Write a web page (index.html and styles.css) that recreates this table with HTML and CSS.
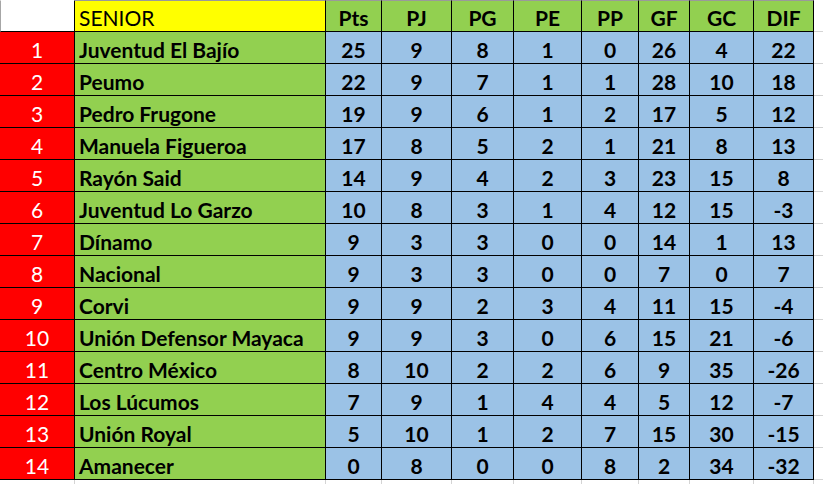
FILE: index.html
```html
<!DOCTYPE html>
<html lang="es">
<head>
<meta charset="utf-8">
<title>Tabla Senior</title>
<link rel="stylesheet" href="styles.css">
</head>
<body>
<div class="sheet">
  <div class="row head">
    <div class="cell corner"></div>
    <div class="cell title">SENIOR</div>
    <div class="cell hstat">Pts</div>
    <div class="cell hstat">PJ</div>
    <div class="cell hstat">PG</div>
    <div class="cell hstat">PE</div>
    <div class="cell hstat">PP</div>
    <div class="cell hstat">GF</div>
    <div class="cell hstat">GC</div>
    <div class="cell hstat">DIF</div>
  </div>
  <div class="row"><div class="cell pos">1</div><div class="cell team">Juventud El Bajío</div><div class="cell stat">25</div><div class="cell stat">9</div><div class="cell stat">8</div><div class="cell stat">1</div><div class="cell stat">0</div><div class="cell stat">26</div><div class="cell stat">4</div><div class="cell stat">22</div></div>
  <div class="row"><div class="cell pos">2</div><div class="cell team">Peumo</div><div class="cell stat">22</div><div class="cell stat">9</div><div class="cell stat">7</div><div class="cell stat">1</div><div class="cell stat">1</div><div class="cell stat">28</div><div class="cell stat">10</div><div class="cell stat">18</div></div>
  <div class="row"><div class="cell pos">3</div><div class="cell team">Pedro Frugone</div><div class="cell stat">19</div><div class="cell stat">9</div><div class="cell stat">6</div><div class="cell stat">1</div><div class="cell stat">2</div><div class="cell stat">17</div><div class="cell stat">5</div><div class="cell stat">12</div></div>
  <div class="row"><div class="cell pos">4</div><div class="cell team">Manuela Figueroa</div><div class="cell stat">17</div><div class="cell stat">8</div><div class="cell stat">5</div><div class="cell stat">2</div><div class="cell stat">1</div><div class="cell stat">21</div><div class="cell stat">8</div><div class="cell stat">13</div></div>
  <div class="row"><div class="cell pos">5</div><div class="cell team">Rayón Said</div><div class="cell stat">14</div><div class="cell stat">9</div><div class="cell stat">4</div><div class="cell stat">2</div><div class="cell stat">3</div><div class="cell stat">23</div><div class="cell stat">15</div><div class="cell stat">8</div></div>
  <div class="row"><div class="cell pos">6</div><div class="cell team">Juventud Lo Garzo</div><div class="cell stat">10</div><div class="cell stat">8</div><div class="cell stat">3</div><div class="cell stat">1</div><div class="cell stat">4</div><div class="cell stat">12</div><div class="cell stat">15</div><div class="cell stat">-3</div></div>
  <div class="row"><div class="cell pos">7</div><div class="cell team">Dínamo</div><div class="cell stat">9</div><div class="cell stat">3</div><div class="cell stat">3</div><div class="cell stat">0</div><div class="cell stat">0</div><div class="cell stat">14</div><div class="cell stat">1</div><div class="cell stat">13</div></div>
  <div class="row"><div class="cell pos">8</div><div class="cell team">Nacional</div><div class="cell stat">9</div><div class="cell stat">3</div><div class="cell stat">3</div><div class="cell stat">0</div><div class="cell stat">0</div><div class="cell stat">7</div><div class="cell stat">0</div><div class="cell stat">7</div></div>
  <div class="row"><div class="cell pos">9</div><div class="cell team">Corvi</div><div class="cell stat">9</div><div class="cell stat">9</div><div class="cell stat">2</div><div class="cell stat">3</div><div class="cell stat">4</div><div class="cell stat">11</div><div class="cell stat">15</div><div class="cell stat">-4</div></div>
  <div class="row"><div class="cell pos">10</div><div class="cell team">Unión Defensor Mayaca</div><div class="cell stat">9</div><div class="cell stat">9</div><div class="cell stat">3</div><div class="cell stat">0</div><div class="cell stat">6</div><div class="cell stat">15</div><div class="cell stat">21</div><div class="cell stat">-6</div></div>
  <div class="row"><div class="cell pos">11</div><div class="cell team">Centro México</div><div class="cell stat">8</div><div class="cell stat">10</div><div class="cell stat">2</div><div class="cell stat">2</div><div class="cell stat">6</div><div class="cell stat">9</div><div class="cell stat">35</div><div class="cell stat">-26</div></div>
  <div class="row"><div class="cell pos">12</div><div class="cell team">Los Lúcumos</div><div class="cell stat">7</div><div class="cell stat">9</div><div class="cell stat">1</div><div class="cell stat">4</div><div class="cell stat">4</div><div class="cell stat">5</div><div class="cell stat">12</div><div class="cell stat">-7</div></div>
  <div class="row"><div class="cell pos">13</div><div class="cell team">Unión Royal</div><div class="cell stat">5</div><div class="cell stat">10</div><div class="cell stat">1</div><div class="cell stat">2</div><div class="cell stat">7</div><div class="cell stat">15</div><div class="cell stat">30</div><div class="cell stat">-15</div></div>
  <div class="row"><div class="cell pos">14</div><div class="cell team">Amanecer</div><div class="cell stat">0</div><div class="cell stat">8</div><div class="cell stat">0</div><div class="cell stat">0</div><div class="cell stat">8</div><div class="cell stat">2</div><div class="cell stat">34</div><div class="cell stat">-32</div></div>
  <div class="row grid-tail"><div class="gl"></div><div class="gl"></div><div class="gl"></div><div class="gl"></div><div class="gl"></div><div class="gl"></div><div class="gl"></div><div class="gl"></div><div class="gl"></div><div class="gl"></div></div>
</div>
</body>
</html>
```

FILE: styles.css
```css
html, body {
  margin: 0;
  padding: 0;
}

body {
  width: 823px;
  height: 484px;
  overflow: hidden;
  background-color: #ffffff;
  background-image: repeating-linear-gradient(to bottom, transparent 0, transparent 31px, #d4d4d4 31px, #d4d4d4 32px);
  font-family: Lato, "Open Sans", "Liberation Sans", sans-serif;
  font-size: 21px;
  color: #000;
}

.sheet {
  display: flex;
  flex-direction: column;
  width: 814px;
}

.row {
  display: grid;
  grid-template-columns: 75px 251px 56px 70px 62px 68px 57px 51px 64px 60px;
  height: 32px;
}

.cell {
  box-sizing: border-box;
  border-right: 1px solid #000;
  border-bottom: 1px solid #000;
  display: flex;
  align-items: center;
  padding-top: 3px;
  line-height: 1;
  white-space: nowrap;
  overflow: hidden;
}

.head .cell {
  border-top: 1px solid #9a9a9a;
}

.corner {
  background: #ffffff;
  border-left: 1px solid #a6a6a6;
  border-top-color: #ffffff !important;
}

.title {
  background: #ffff00;
  padding-left: 4px;
  font-weight: 400;
}

.hstat {
  background: #92d050;
  justify-content: center;
  font-weight: 700;
}

.pos {
  background: #ff0000;
  color: #ffffff;
  justify-content: center;
  font-weight: 400;
}

.team {
  background: #92d050;
  padding-left: 4px;
  font-weight: 700;
}

.stat {
  background: #9bc2e6;
  justify-content: center;
  font-weight: 700;
}

.grid-tail {
  height: 4px;
}

.gl {
  border-right: 1px solid #d4d4d4;
}
```
